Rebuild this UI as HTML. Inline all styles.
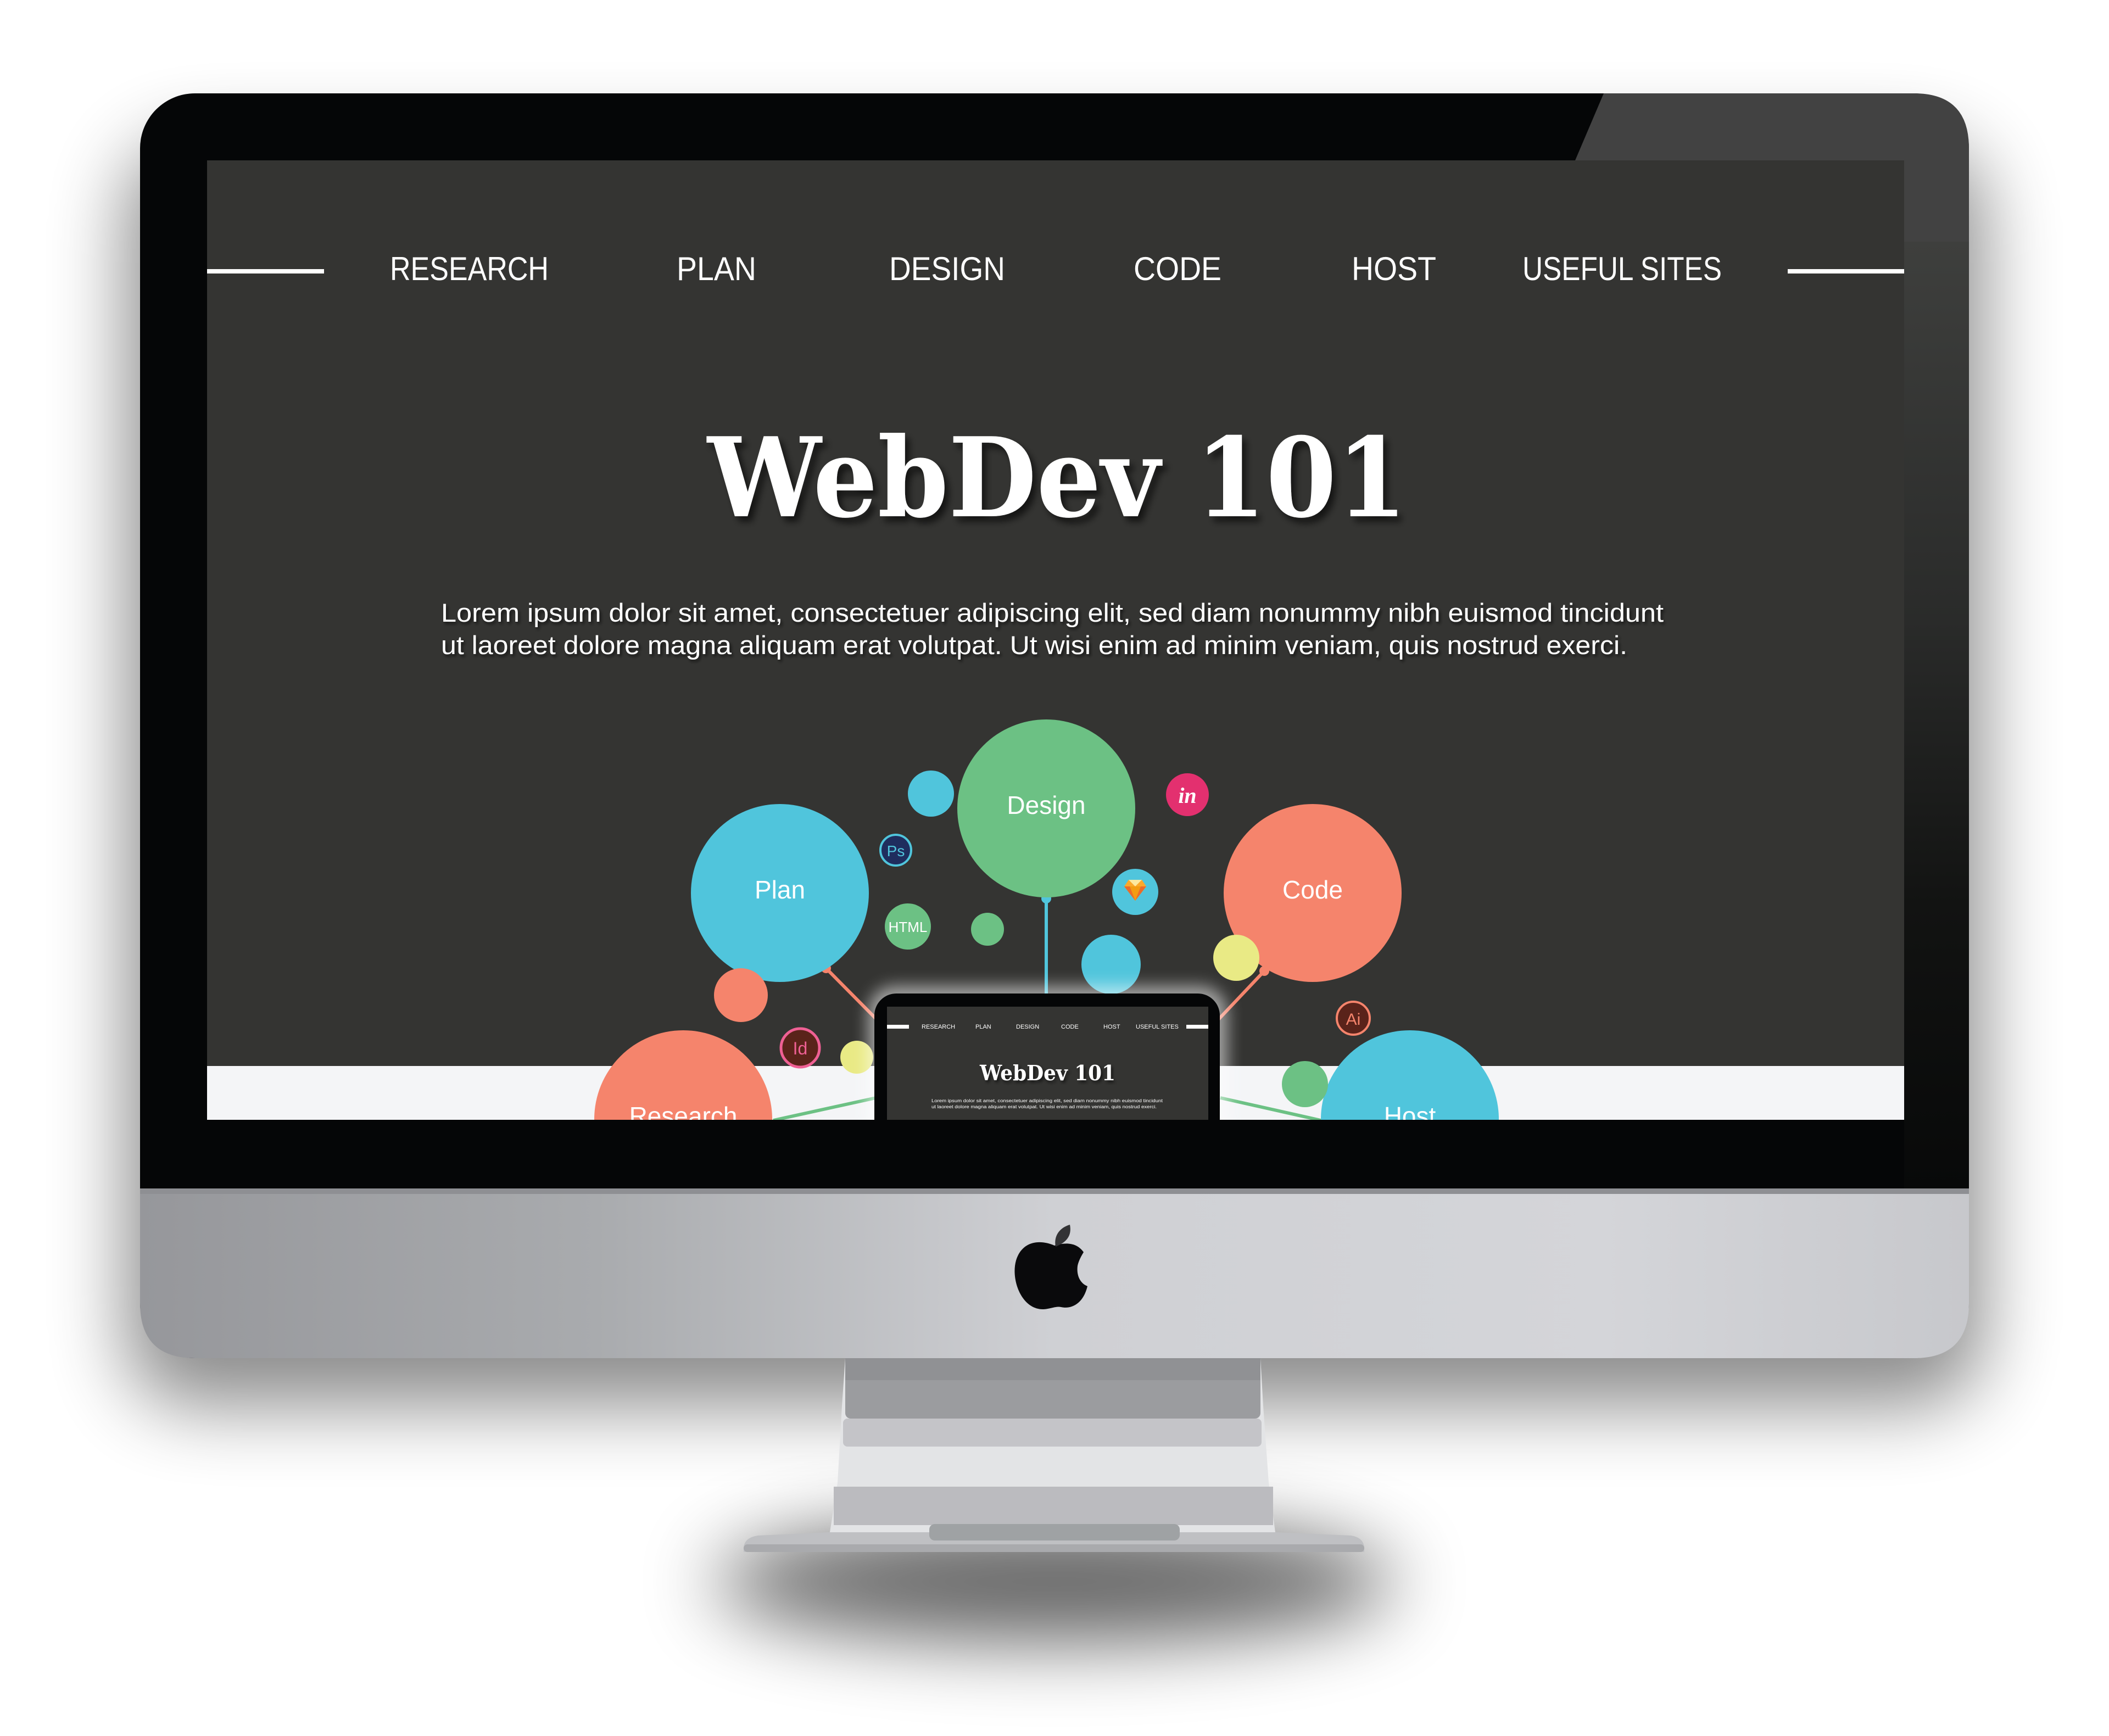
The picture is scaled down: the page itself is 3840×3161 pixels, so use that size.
<!DOCTYPE html>
<html><head><meta charset="utf-8">
<style>
html,body{margin:0;padding:0;background:#fff;}
body{width:3840px;height:3161px;overflow:hidden;position:relative;}
svg{position:absolute;left:0;top:0;}
</style></head>
<body>
<svg width="3840" height="3161" viewBox="0 0 3840 3161" xmlns="http://www.w3.org/2000/svg">
<defs>
  <filter id="blur80" filterUnits="userSpaceOnUse" x="0" y="0" width="3840" height="3161"><feGaussianBlur stdDeviation="70"/></filter>
  <filter id="glow" x="-20%" y="-20%" width="140%" height="140%"><feGaussianBlur stdDeviation="14"/></filter>
  <filter id="tshadow" x="-10%" y="-10%" width="120%" height="130%"><feDropShadow dx="8" dy="10" stdDeviation="6" flood-color="#000" flood-opacity="0.6"/></filter>
  <filter id="tshadow2" x="-10%" y="-10%" width="120%" height="140%"><feDropShadow dx="3" dy="4" stdDeviation="3" flood-color="#000" flood-opacity="0.6"/></filter>
  <linearGradient id="chin" x1="0" y1="0" x2="1" y2="0">
    <stop offset="0" stop-color="#96979b"/>
    <stop offset="0.25" stop-color="#a9abae"/>
    <stop offset="0.5" stop-color="#cfd0d4"/>
    <stop offset="0.8" stop-color="#d4d5d9"/>
    <stop offset="1" stop-color="#c7c8cc"/>
  </linearGradient>
  <linearGradient id="rside" x1="0" y1="0" x2="0" y2="1">
    <stop offset="0" stop-color="#3e3f3d"/>
    <stop offset="0.4" stop-color="#2a2b2a"/>
    <stop offset="0.7" stop-color="#121312"/>
    <stop offset="1" stop-color="#080909"/>
  </linearGradient>
  <clipPath id="scr"><rect x="377" y="292" width="3090" height="1747"/></clipPath>
  <clipPath id="mini"><rect x="1615" y="1833" width="585" height="206"/></clipPath>
</defs>

<!-- shadows -->
<rect x="230" y="260" width="3380" height="2300" rx="120" fill="#000" opacity="0.45" filter="url(#blur80)"/>
<ellipse cx="1920" cy="2880" rx="620" ry="110" fill="#000" opacity="0.6" filter="url(#blur80)"/>

<!-- monitor body -->
<rect x="255" y="170" width="3330" height="2303" rx="100" fill="#050607"/>
<path d="M2920 170 L3485 170 Q3585 170 3585 270 L3585 2164 L3467 2164 L3467 292 L2868 292 Z" fill="#424242"/>
<rect x="3467" y="440" width="118" height="1724" fill="url(#rside)"/>
<rect x="255" y="2164" width="3330" height="60" fill="#050607"/>
<path d="M255 2164 L3585 2164 L3585 2373 Q3585 2473 3485 2473 L355 2473 Q255 2473 255 2373 Z" fill="url(#chin)"/>
<rect x="255" y="2164" width="3330" height="10" fill="#8e8f93"/>

<!-- apple logo -->
<path d="M1920 2268 C1890 2255 1860 2262 1850 2295 C1840 2330 1860 2385 1900 2384 C1915 2383 1922 2378 1932 2380 C1950 2384 1972 2375 1980 2342 C1965 2336 1960 2320 1962 2305 C1964 2295 1970 2285 1973 2280 C1960 2262 1940 2262 1920 2268 Z" fill="#0a0a0c"/>
<path d="M1922 2270 C1918 2250 1930 2235 1948 2230 C1952 2250 1942 2262 1922 2270 Z" fill="#333335"/>

<!-- stand -->
<path d="M1539 2473 L2295 2473 L2300 2560 L2310 2700 L2322 2790 L1511 2790 L1525 2700 L1533 2560 Z" fill="#e3e4e6"/>
<rect x="1539" y="2473" width="756" height="110" rx="10" fill="#9b9c9f"/>
<rect x="1539" y="2473" width="756" height="40" fill="#909194"/>
<rect x="1535" y="2583" width="762" height="51" rx="8" fill="#c4c4c8"/>
<rect x="1518" y="2707" width="800" height="70" fill="#bbbbbf"/>
<path d="M1354 2820 Q1354 2800 1380 2796 L1510 2790 L2322 2790 L2460 2796 Q2484 2800 2484 2820 L2484 2826 L1354 2826 Z" fill="#bfc0c3"/>
<rect x="1692" y="2775" width="456" height="30" rx="10" fill="#9fa2a4"/>
<rect x="1354" y="2812" width="1130" height="14" rx="7" fill="#a9aaad"/>

<!-- screen -->
<g clip-path="url(#scr)">
  <rect x="377" y="292" width="3090" height="1747" fill="#343432"/>
  <rect x="377" y="1941" width="3090" height="98" fill="#f4f5f7"/>
  <!-- nav -->
  <rect x="377" y="490" width="213" height="8" fill="#fff"/>
  <rect x="3255" y="490" width="212" height="8" fill="#fff"/>
  <g font-family="Liberation Sans, sans-serif" font-size="60" fill="#fff">
    <text x="710" y="510" textLength="289" lengthAdjust="spacingAndGlyphs">RESEARCH</text>
    <text x="1232" y="510" textLength="145" lengthAdjust="spacingAndGlyphs">PLAN</text>
    <text x="1619" y="510" textLength="211" lengthAdjust="spacingAndGlyphs">DESIGN</text>
    <text x="2064" y="510" textLength="160" lengthAdjust="spacingAndGlyphs">CODE</text>
    <text x="2461" y="510" textLength="154" lengthAdjust="spacingAndGlyphs">HOST</text>
    <text x="2772" y="510" textLength="363" lengthAdjust="spacingAndGlyphs">USEFUL SITES</text>
  </g>
  <!-- title -->
  <text x="1288" y="940" font-family="DejaVu Serif, serif" font-weight="bold" font-size="200" fill="#fff" textLength="1274" lengthAdjust="spacingAndGlyphs" filter="url(#tshadow)">WebDev 101</text>
  <g font-family="Liberation Sans, sans-serif" font-size="47" fill="#fff" filter="url(#tshadow2)">
    <text x="803" y="1132" textLength="2226" lengthAdjust="spacingAndGlyphs">Lorem ipsum dolor sit amet, consectetuer adipiscing elit, sed diam nonummy nibh euismod tincidunt</text>
    <text x="803" y="1191" textLength="2160" lengthAdjust="spacingAndGlyphs">ut laoreet dolore magna aliquam erat volutpat. Ut wisi enim ad minim veniam, quis nostrud exerci.</text>
  </g>

  <!-- connector lines -->
  <line x1="1905" y1="1630" x2="1905" y2="1815" stroke="#50c5dc" stroke-width="6"/>
  <circle cx="1905" cy="1636" r="9" fill="#50c5dc"/>
  <line x1="1504" y1="1763" x2="1600" y2="1860" stroke="#f5846c" stroke-width="6"/>
  <circle cx="1504" cy="1763" r="9" fill="#f5846c"/>
  <line x1="2302" y1="1768" x2="2215" y2="1860" stroke="#f5846c" stroke-width="6"/>
  <circle cx="2302" cy="1768" r="9" fill="#f5846c"/>
  <line x1="1408" y1="2040" x2="1595" y2="1999" stroke="#6cc184" stroke-width="6"/>
  <line x1="2405" y1="2040" x2="2222" y2="1999" stroke="#6cc184" stroke-width="6"/>

  <!-- bubbles -->
  <g font-family="Liberation Sans, sans-serif" fill="#fff" text-anchor="middle">
    <circle cx="1905" cy="1472" r="162" fill="#6cc184"/>
    <text x="1905" y="1482" font-size="46" fill="#fff">Design</text>
    <circle cx="1420" cy="1626" r="162" fill="#50c5dc"/>
    <text x="1420" y="1636" font-size="46" fill="#fff">Plan</text>
    <circle cx="2390" cy="1626" r="162" fill="#f5846c"/>
    <text x="2390" y="1636" font-size="46" fill="#fff">Code</text>
    <circle cx="1244" cy="2038" r="162" fill="#f5846c"/>
    <text x="1244" y="2048" font-size="46" fill="#fff">Research</text>
    <circle cx="2567" cy="2038" r="162" fill="#50c5dc"/>
    <text x="2567" y="2048" font-size="46" fill="#fff">Host</text>

    <circle cx="1695" cy="1445" r="42" fill="#50c5dc"/>
    <circle cx="2162" cy="1447" r="39" fill="#e3306f"/>
    <text x="2162" y="1462" font-family="Liberation Serif, serif" font-style="italic" font-weight="bold" font-size="40" fill="#fff">in</text>
    <circle cx="1631" cy="1548" r="28" fill="#1f2d5e" stroke="#50c5dc" stroke-width="4"/>
    <text x="1631" y="1559" font-size="28" fill="#50c5dc">Ps</text>
    <circle cx="2067" cy="1624" r="42" fill="#50c5dc"/>
    <path d="M2047 1614 L2055 1602 L2079 1602 L2087 1614 L2067 1640 Z" fill="#fba82c"/>
    <path d="M2055 1602 L2079 1602 L2067 1614 Z" fill="#fde9a0"/>
    <path d="M2047 1614 L2087 1614 L2067 1640 Z" fill="#f39c12"/>
    <path d="M2047 1614 L2057 1614 L2067 1640 Z" fill="#ea6b2a"/>
    <path d="M2077 1614 L2087 1614 L2067 1640 Z" fill="#ea6b2a"/>
    <circle cx="1653" cy="1687" r="42" fill="#6cc184"/>
    <text x="1653" y="1697" font-size="26" fill="#fff">HTML</text>
    <circle cx="1798" cy="1692" r="30" fill="#6cc184"/>
    <circle cx="2023" cy="1756" r="54" fill="#50c5dc"/>
    <circle cx="2251" cy="1744" r="42" fill="#e9ea85"/>
    <circle cx="1349" cy="1812" r="49" fill="#f5846c"/>
    <circle cx="1457" cy="1908" r="35" fill="#5a231a" stroke="#ef6094" stroke-width="5"/>
    <text x="1457" y="1920" font-size="32" fill="#ef6094">Id</text>
    <circle cx="1560" cy="1925" r="30" fill="#e9ea85"/>
    <circle cx="2464" cy="1854" r="30" fill="#5a231a" stroke="#f5846c" stroke-width="4"/>
    <text x="2464" y="1866" font-size="30" fill="#f5846c">Ai</text>
    <circle cx="2376" cy="1974" r="42" fill="#6cc184"/>
  </g>

  <!-- mini monitor -->
  <rect x="1580" y="1795" width="655" height="300" rx="50" fill="#fff" opacity="0.55" filter="url(#glow)"/>
  <rect x="1592" y="1809" width="629" height="300" rx="40" fill="#050607"/>
  <g clip-path="url(#mini)">
    <rect x="1615" y="1833" width="585" height="206" fill="#343432"/>
    <rect x="1615" y="1866" width="40" height="7" fill="#fff"/>
    <rect x="2160" y="1866" width="40" height="7" fill="#fff"/>
    <g font-family="Liberation Sans, sans-serif" font-size="11" fill="#fff">
      <text x="1678" y="1873">RESEARCH</text>
      <text x="1776" y="1873">PLAN</text>
      <text x="1850" y="1873">DESIGN</text>
      <text x="1932" y="1873">CODE</text>
      <text x="2009" y="1873">HOST</text>
      <text x="2068" y="1873">USEFUL SITES</text>
    </g>
    <text x="1784" y="1967" font-family="DejaVu Serif, serif" font-weight="bold" font-size="38" fill="#fff" textLength="247" lengthAdjust="spacingAndGlyphs" filter="url(#tshadow2)">WebDev 101</text>
    <g font-family="Liberation Sans, sans-serif" font-size="8" fill="#fff">
      <text x="1696" y="2007" textLength="421" lengthAdjust="spacingAndGlyphs">Lorem ipsum dolor sit amet, consectetuer adipiscing elit, sed diam nonummy nibh euismod tincidunt</text>
      <text x="1696" y="2018" textLength="410" lengthAdjust="spacingAndGlyphs">ut laoreet dolore magna aliquam erat volutpat. Ut wisi enim ad minim veniam, quis nostrud exerci.</text>
    </g>
  </g>
</g>
</svg>
</body></html>
